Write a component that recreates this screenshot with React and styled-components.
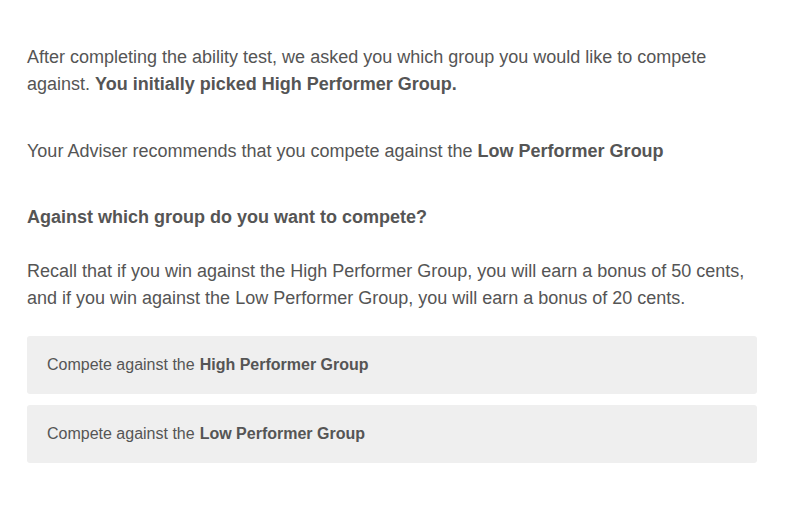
import React from "react";
import styled, { createGlobalStyle } from "styled-components";

const GlobalStyle = createGlobalStyle`
  html, body {
    margin: 0;
    padding: 0;
    background: #fff;
  }
  body {
    font-family: "Liberation Sans", Arial, Helvetica, sans-serif;
    color: #555;
  }
`;

const Page = styled.div`
  width: 730px;
  padding: 44px 0 40px 27px;
`;

const Text = styled.p`
  margin: 0 0 ${(p) => p.$gap ?? 40}px;
  font-size: 18px;
  line-height: 27px;
  b {
    font-weight: bold;
  }
`;

const Choices = styled.div`
  display: flex;
  flex-direction: column;
  gap: 11px;
  margin-top: 24px;
`;

const Choice = styled.button`
  display: flex;
  align-items: center;
  height: 58px;
  padding: 0 20px;
  border: none;
  border-radius: 3px;
  background: #efefef;
  color: #555;
  font-family: inherit;
  font-size: 16px;
  text-align: left;
  cursor: pointer;
  b {
    margin-left: 5px;
  }
`;

const options = ["High Performer Group", "Low Performer Group"];

const App = () => {
  return (
    <>
      <GlobalStyle />
      <Page>
        <Text>
          After completing the ability test, we asked you which group you would like to compete
          against. <b>You initially picked High Performer Group.</b>
        </Text>
        <Text $gap={39}>
          Your Adviser recommends that you compete against the <b>Low Performer Group</b>
        </Text>
        <Text $gap={27}>
          <b>Against which group do you want to compete?</b>
        </Text>
        <Text $gap={0}>
          Recall that if you win against the High Performer Group, you will earn a bonus of 50 cents,
          and if you win against the Low Performer Group, you will earn a bonus of 20 cents.
        </Text>
        <Choices>
          {options.map((o) => (
            <Choice key={o}>
              Compete against the <b>{o}</b>
            </Choice>
          ))}
        </Choices>
      </Page>
    </>
  );
};

export default App;
